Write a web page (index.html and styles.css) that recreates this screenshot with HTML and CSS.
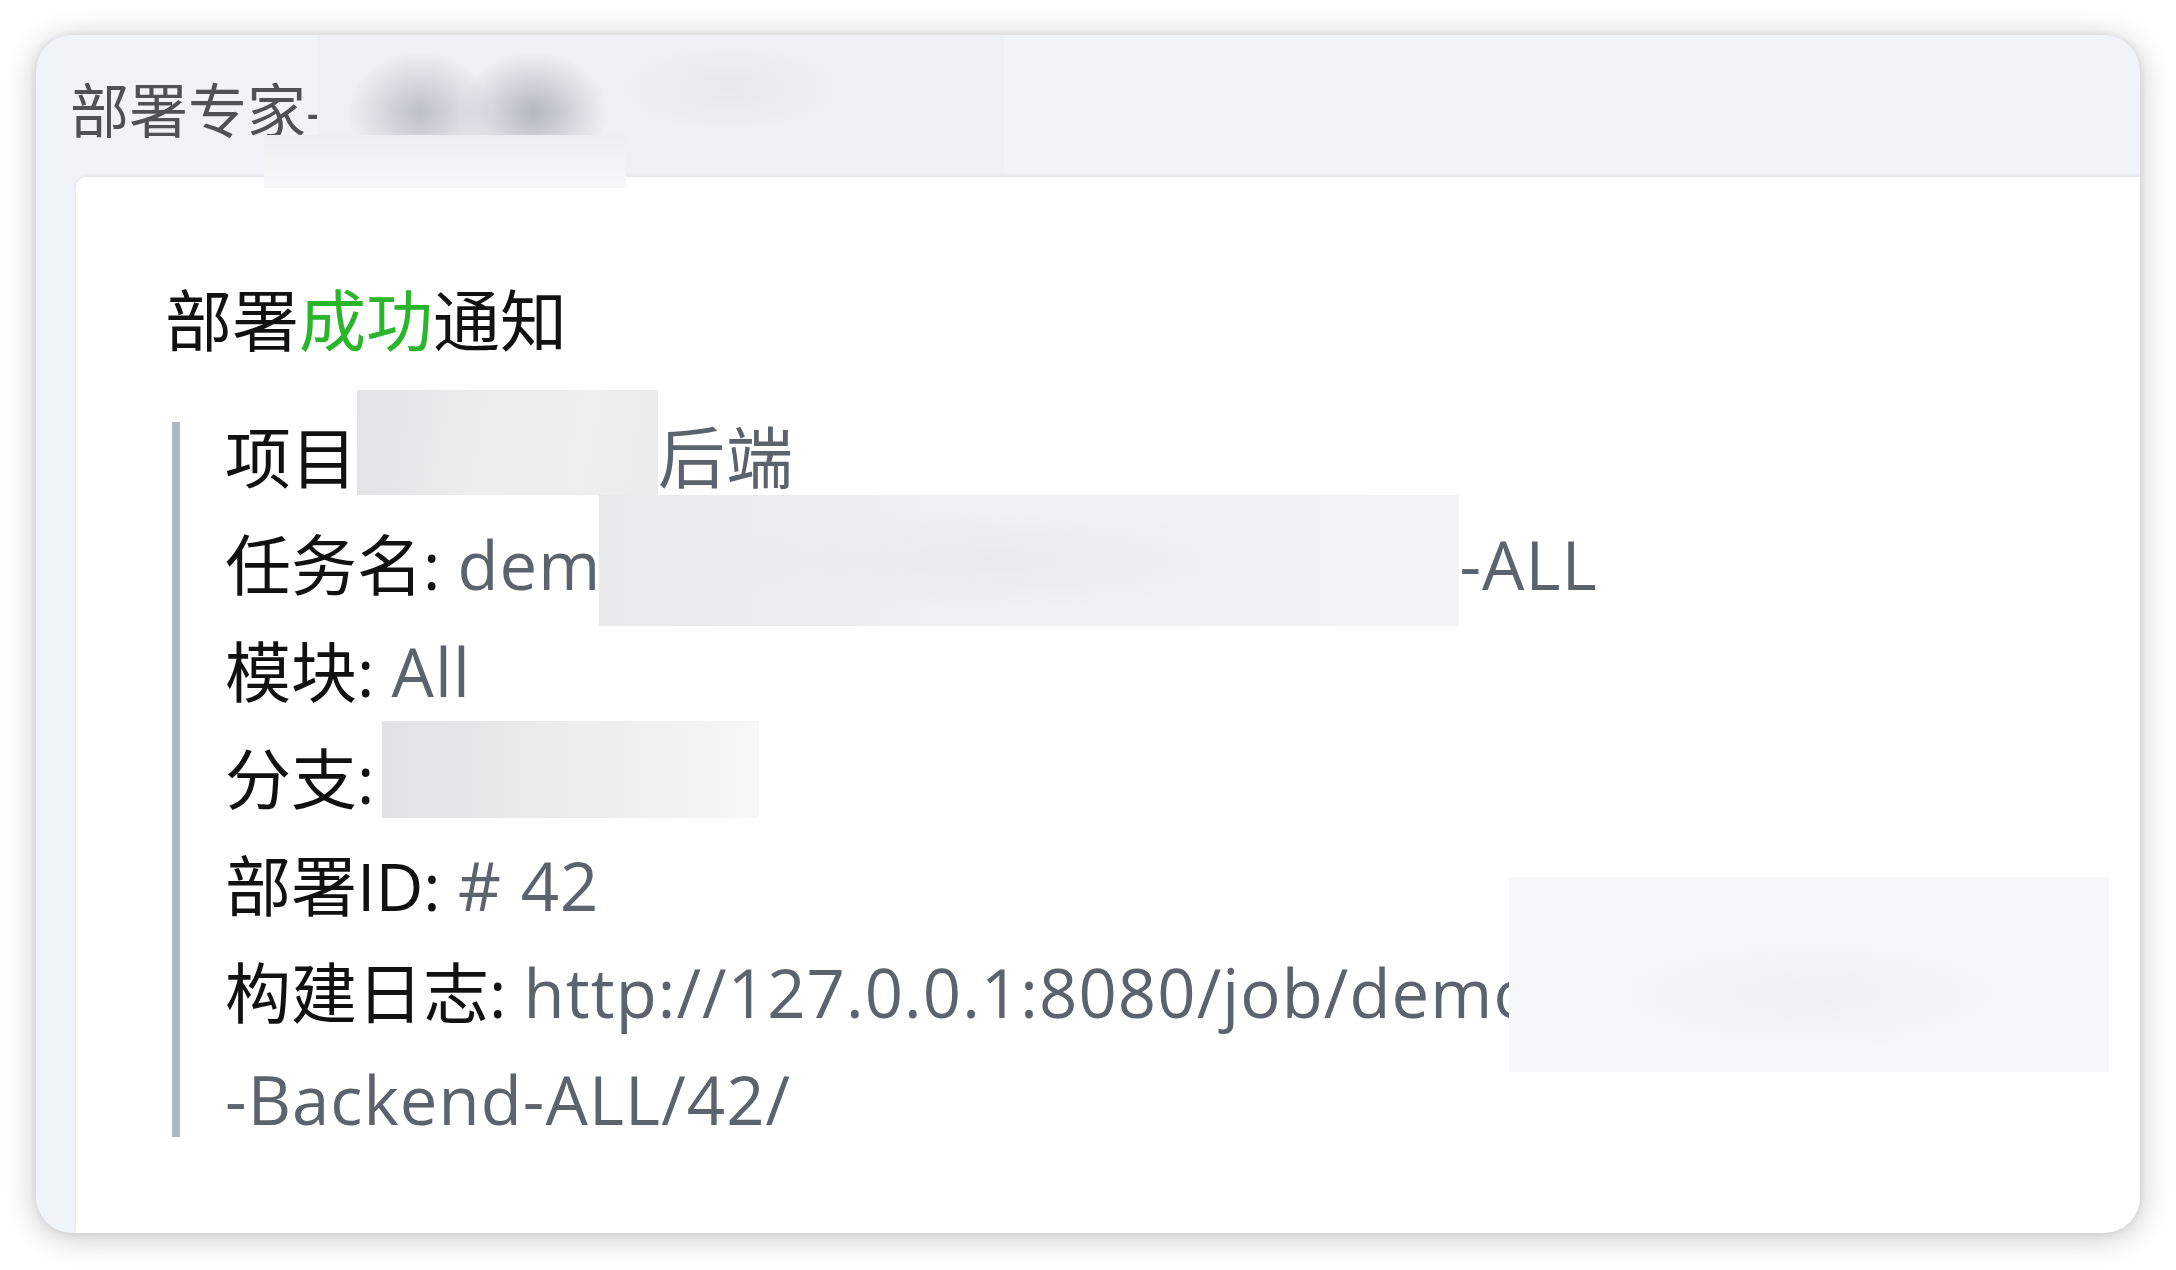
FILE: index.html
```html
<!DOCTYPE html>
<html lang="zh-CN">
<head>
<meta charset="utf-8">
<title>部署专家</title>
<link rel="stylesheet" href="styles.css">
</head>
<body>
<div class="window">
  <div class="header">
    <span class="title">部署专家-</span>
    <span class="redact redact-header"></span>
  </div>
  <span class="redact redact-patch"></span>
  <div class="card">
    <h3 class="heading">部署<span class="ok">成功</span>通知</h3>
    <div class="quote">
      <div class="quote-body">
        <div class="row"><span class="label">项目</span><span class="redact r1"></span><span class="val">后端</span></div>
        <div class="row"><span class="label">任务名: </span><span class="val">dem<span class="redact r2"></span>-ALL</span></div>
        <div class="row"><span class="label">模块: </span><span class="val">All</span></div>
        <div class="row"><span class="label">分支:</span><span class="redact r3"></span></div>
        <div class="row"><span class="label">部署ID: </span><span class="val"># 42</span></div>
        <div class="row"><span class="label">构建日志: </span><span class="val">http://127.0.0.1:8080/job/demo<span class="redact r4"></span><br>-Backend-ALL/42/</span></div>
      </div>
    </div>
  </div>
</div>
</body>
</html>
```
FILE: styles.css
```css
html, body {
  margin: 0;
  padding: 0;
  background: #ffffff;
}

body {
  padding: 35px 36px;
  font-family: "Open Sans", "Noto Sans CJK SC", sans-serif;
}

.window {
  position: relative;
  width: 2104px;
  height: 1198px;
  border-radius: 36px;
  background: #f0f3f8;
  box-shadow: 0 4px 30px rgba(0, 0, 0, 0.24), 0 0 6px rgba(0, 0, 0, 0.08);
  overflow: hidden;
  display: flex;
  flex-direction: column;
}

.header {
  height: 142px;
  flex: none;
  display: flex;
  align-items: flex-start;
  padding-left: 34px;
}

.title {
  align-self: center;
  padding-top: 8px;
  font-size: 59px;
  line-height: 59px;
  color: #4e5156;
  white-space: nowrap;
}

.redact {
  display: inline-block;
}

.redact-header {
  width: 687px;
  height: 140px;
  margin-left: -8px;
  background:
    radial-gradient(ellipse 72px 60px at 15% 55%, rgba(168, 173, 181, 0.72), rgba(168, 173, 181, 0) 100%),
    radial-gradient(ellipse 74px 60px at 31.5% 55%, rgba(163, 168, 176, 0.78), rgba(163, 168, 176, 0) 100%),
    radial-gradient(ellipse 110px 45px at 60% 38%, rgba(226, 229, 234, 0.7), rgba(226, 229, 234, 0) 100%),
    #eef0f4;
}

.redact-patch {
  position: absolute;
  left: 228px;
  top: 100px;
  width: 362px;
  height: 53px;
  background: linear-gradient(180deg, #eceef2, #f7f8f9);
}

.card {
  flex: 1;
  margin-left: 40px;
  background: #ffffff;
  border-top-left-radius: 10px;
  box-shadow: 0 -1px 4px rgba(0, 0, 0, 0.07);
  padding: 93px 30px 0 89px;
}

.heading {
  margin: 0;
  font-size: 67px;
  line-height: 100px;
  font-weight: 400;
  color: #111111;
}

.ok {
  color: #2bb52b;
}

.quote {
  display: flex;
  flex-direction: column;
  margin: 52px 0 0 7px;
  border-left: 8px solid #aeb7c5;
  padding-left: 45px;
}

.quote-body {
  margin-top: -18.5px;
  margin-bottom: -15.5px;
  font-size: 66px;
  line-height: 107px;
  color: #111111;
  white-space: nowrap;
}

.label {
  color: #111111;
}

.val {
  color: #5d636d;
  font-size: 67px;
  letter-spacing: 1.1px;
}

.r1 {
  vertical-align: top;
  width: 301px;
  height: 105px;
  margin-top: -14px;
  background: linear-gradient(100deg, #e2e3e4 0%, #eceded 45%, #eeefef 75%, #e9eaea 100%);
}

.r2 {
  vertical-align: top;
  width: 860px;
  height: 131px;
  margin-top: -16px;
  margin-bottom: -12px;
  margin-left: -2px;
  background:
    radial-gradient(ellipse 300px 50px at 45% 50%, rgba(232, 233, 235, 0.8), rgba(232, 233, 235, 0)),
    linear-gradient(90deg, #e8e9ea 0%, #eff0f1 40%, #f2f3f4 100%);
}

.r3 {
  vertical-align: top;
  width: 377px;
  height: 97px;
  margin-top: -4px;
  margin-left: 8px;
  background: linear-gradient(90deg, #e1e2e3 0%, #ebecec 50%, #f3f3f4 85%, #f8f8f8 100%);
}

.r4 {
  vertical-align: top;
  width: 600px;
  height: 195px;
  margin-top: -62px;
  margin-bottom: -30px;
  margin-left: -26px;
  background:
    radial-gradient(ellipse 220px 60px at 50% 60%, rgba(238, 239, 241, 0.9), rgba(238, 239, 241, 0)),
    #f6f7f8;
}
```
